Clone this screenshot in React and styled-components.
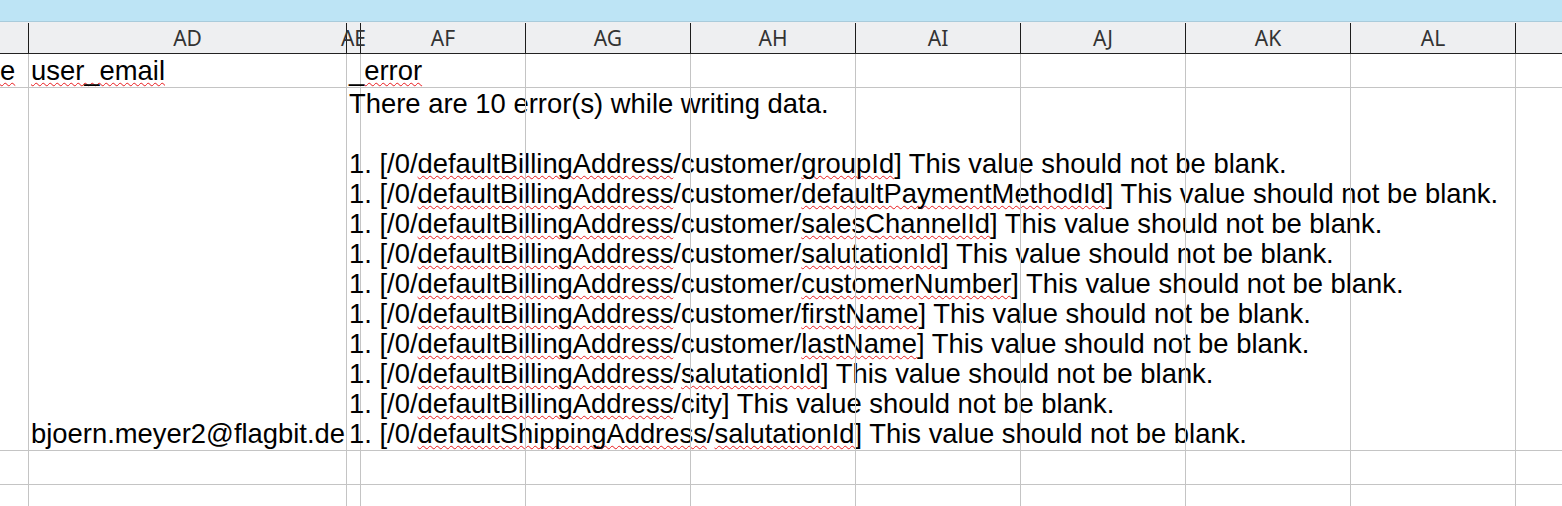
import React from 'react';
import styled, { createGlobalStyle } from 'styled-components';

const GlobalStyle = createGlobalStyle`
  html, body {
    margin: 0;
    padding: 0;
    background: #ffffff;
    overflow: hidden;
  }
`;

const columns = [
  { key: 'AC', label: '', width: 29 },
  { key: 'AD', label: 'AD', width: 318 },
  { key: 'AE', label: 'AE', width: 14 },
  { key: 'AF', label: 'AF', width: 165 },
  { key: 'AG', label: 'AG', width: 165 },
  { key: 'AH', label: 'AH', width: 165 },
  { key: 'AI', label: 'AI', width: 165 },
  { key: 'AJ', label: 'AJ', width: 165 },
  { key: 'AK', label: 'AK', width: 165 },
  { key: 'AL', label: 'AL', width: 165 },
  { key: 'AM', label: '', width: 0 },
];

// words the spell checker knows, everything else in a path gets the red wave
const knownWords = ['customer', 'city'];

const errorPaths = [
  'defaultBillingAddress/customer/groupId',
  'defaultBillingAddress/customer/defaultPaymentMethodId',
  'defaultBillingAddress/customer/salesChannelId',
  'defaultBillingAddress/customer/salutationId',
  'defaultBillingAddress/customer/customerNumber',
  'defaultBillingAddress/customer/firstName',
  'defaultBillingAddress/customer/lastName',
  'defaultBillingAddress/salutationId',
  'defaultBillingAddress/city',
  'defaultShippingAddress/salutationId',
];

const Sheet = styled.div`
  width: 1562px;
  height: 506px;
  overflow: hidden;
  font-family: 'Liberation Sans', Arial, sans-serif;
  color: #000;
`;

const TitleBar = styled.div`
  height: 22px;
  box-sizing: border-box;
  background: #bde4f5;
  border-bottom: 1px solid #a9cbdb;
`;

const HeaderRow = styled.div`
  display: flex;
  height: 32px;
  box-sizing: border-box;
  background: #eeeff1;
  border-bottom: 1px solid #222;
`;

const HeaderCell = styled.div`
  flex: ${p => (p.$width ? 'none' : '1')};
  width: ${p => (p.$width ? `${p.$width}px` : 'auto')};
  min-width: 0;
  box-sizing: border-box;
  margin-top: 1px;
  border-right: ${p => (p.$last ? 'none' : '1px solid #1c1c1c')};
  display: flex;
  align-items: center;
  justify-content: center;
  overflow: visible;
  white-space: nowrap;
  font-family: 'Noto Sans', 'Open Sans', sans-serif;
  font-size: 21px;
  color: #333;
  padding-bottom: 1px;
`;

const Row = styled.div`
  display: flex;
  height: ${p => p.$height}px;
  box-sizing: border-box;
  border-bottom: 1px solid #c4c4c4;
`;

const Cell = styled.div`
  flex: ${p => (p.$width ? 'none' : '1')};
  width: ${p => (p.$width ? `${p.$width}px` : 'auto')};
  min-width: 0;
  box-sizing: border-box;
  border-right: ${p => (p.$last ? 'none' : '1px solid #c4c4c4')};
  display: flex;
  flex-direction: column;
  justify-content: flex-end;
  padding: 0 0 1px ${p => (p.$flush ? 0 : 2)}px;
  overflow: visible;
  font-size: 27.4px;
  line-height: 30px;
  white-space: pre;
`;

const Line = styled.div`
  height: 30px;
`;

const Squiggle = styled.span`
  text-decoration: underline wavy #e8191d;
  text-decoration-thickness: 1px;
  text-underline-offset: 2px;
  text-decoration-skip-ink: none;
`;

const PathLine = ({ path }) => {
  const parts = path.split('/');
  return (
    <Line>
      1. [/0/
      {parts.map((part, i) => (
        <React.Fragment key={i}>
          {i > 0 && '/'}
          {knownWords.includes(part) ? part : <Squiggle>{part}</Squiggle>}
        </React.Fragment>
      ))}
      ] This value should not be blank.
    </Line>
  );
};

const cellsFor = content =>
  columns.map((col, i) => (
    <Cell
      key={col.key}
      $width={col.width}
      $last={i === columns.length - 1}
      $flush={col.key === 'AC'}
    >
      {content[col.key] || null}
    </Cell>
  ));

const App = () => {
  const headerRow = {
    AC: <Line><Squiggle>e</Squiggle></Line>,
    AD: <Line><Squiggle>user_email</Squiggle></Line>,
    AE: <Line>_<Squiggle>error</Squiggle></Line>,
  };

  const dataRow = {
    AD: <Line>bjoern.meyer2@flagbit.de</Line>,
    AE: (
      <>
        <Line>There are 10 error(s) while writing data.</Line>
        <Line />
        {errorPaths.map(p => (
          <PathLine key={p} path={p} />
        ))}
      </>
    ),
  };

  return (
    <>
      <GlobalStyle />
      <Sheet>
        <TitleBar />
        <HeaderRow>
          {columns.map((col, i) => (
            <HeaderCell key={col.key} $width={col.width} $last={i === columns.length - 1}>
              {col.label}
            </HeaderCell>
          ))}
        </HeaderRow>
        <Row $height={34}>{cellsFor(headerRow)}</Row>
        <Row $height={363}>{cellsFor(dataRow)}</Row>
        <Row $height={34}>{cellsFor({})}</Row>
        <Row $height={34}>{cellsFor({})}</Row>
      </Sheet>
    </>
  );
};

export default App;
